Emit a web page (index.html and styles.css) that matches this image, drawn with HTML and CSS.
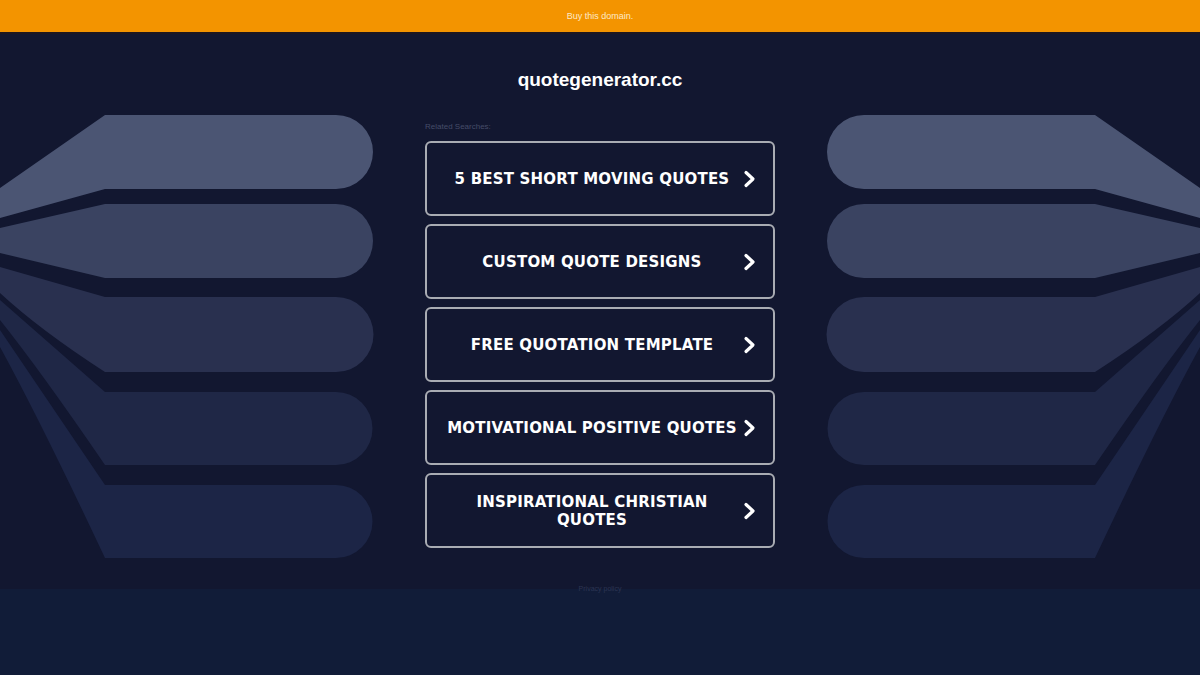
FILE: index.html
```html
<!DOCTYPE html>
<html lang="en">
<head>
<meta charset="utf-8">
<title>quotegenerator.cc</title>
<link rel="stylesheet" href="styles.css">
</head>
<body>
<div class="topbar"><a class="buy" href="#">Buy this domain.</a></div>
<div class="stage">
  <svg class="deco deco-left" width="380" height="589" viewBox="0 0 380 589" aria-hidden="true">
    <path fill="#4b5573" d="M105,115 H336 A37,37 0 0 1 336,189 H105 L0,218 V188 Z"/>
    <path fill="#3a4361" d="M105,204 H336 A37,37 0 0 1 336,278 H105 L0,253 V228 Z"/>
    <path fill="#29304f" d="M105,297 H336 A37.5,37.5 0 0 1 336,372 H105 Q40,330 0,293 V267 Z"/>
    <path fill="#1f2746" d="M105,392 H336 A36.5,36.5 0 0 1 336,465 H105 Q40,370 0,320 V300 Z"/>
    <path fill="#1c2546" d="M105,485 H336 A36.5,36.5 0 0 1 336,558 H105 Q40,420 0,347 V330 Z"/>
  </svg>
  <svg class="deco deco-right" width="380" height="589" viewBox="0 0 380 589" aria-hidden="true">
    <path fill="#4b5573" d="M105,115 H336 A37,37 0 0 1 336,189 H105 L0,218 V188 Z"/>
    <path fill="#3a4361" d="M105,204 H336 A37,37 0 0 1 336,278 H105 L0,253 V228 Z"/>
    <path fill="#29304f" d="M105,297 H336 A37.5,37.5 0 0 1 336,372 H105 Q40,330 0,293 V267 Z"/>
    <path fill="#1f2746" d="M105,392 H336 A36.5,36.5 0 0 1 336,465 H105 Q40,370 0,320 V300 Z"/>
    <path fill="#1c2546" d="M105,485 H336 A36.5,36.5 0 0 1 336,558 H105 Q40,420 0,347 V330 Z"/>
  </svg>
  <main class="content">
    <h1 class="domain">quotegenerator.cc</h1>
    <p class="related">Related Searches:</p>
    <ul class="links">
      <li><a class="link" href="#"><span class="label">5 BEST SHORT MOVING QUOTES</span><svg class="chev" width="14" height="18" viewBox="0 0 14 18"><path d="M3,2.5 L10,9 L3,15.5" fill="none" stroke="#fff" stroke-width="3.2" stroke-linecap="round" stroke-linejoin="round"/></svg></a></li>
      <li><a class="link" href="#"><span class="label">CUSTOM QUOTE DESIGNS</span><svg class="chev" width="14" height="18" viewBox="0 0 14 18"><path d="M3,2.5 L10,9 L3,15.5" fill="none" stroke="#fff" stroke-width="3.2" stroke-linecap="round" stroke-linejoin="round"/></svg></a></li>
      <li><a class="link" href="#"><span class="label">FREE QUOTATION TEMPLATE</span><svg class="chev" width="14" height="18" viewBox="0 0 14 18"><path d="M3,2.5 L10,9 L3,15.5" fill="none" stroke="#fff" stroke-width="3.2" stroke-linecap="round" stroke-linejoin="round"/></svg></a></li>
      <li><a class="link" href="#"><span class="label">MOTIVATIONAL POSITIVE QUOTES</span><svg class="chev" width="14" height="18" viewBox="0 0 14 18"><path d="M3,2.5 L10,9 L3,15.5" fill="none" stroke="#fff" stroke-width="3.2" stroke-linecap="round" stroke-linejoin="round"/></svg></a></li>
      <li><a class="link" href="#"><span class="label">INSPIRATIONAL CHRISTIAN QUOTES</span><svg class="chev" width="14" height="18" viewBox="0 0 14 18"><path d="M3,2.5 L10,9 L3,15.5" fill="none" stroke="#fff" stroke-width="3.2" stroke-linecap="round" stroke-linejoin="round"/></svg></a></li>
    </ul>
  </main>
</div>
<footer class="footer"><a class="privacy" href="#">Privacy policy</a></footer>
</body>
</html>
```
FILE: styles.css
```css
html, body {
  margin: 0;
  padding: 0;
}
body {
  background: #111c38;
  font-family: "Liberation Sans", Arial, sans-serif;
  color: #fff;
  overflow: hidden;
}
.topbar {
  height: 32px;
  background: #f39400;
  border-bottom: 2px solid #1d1720;
  display: flex;
  align-items: center;
  justify-content: center;
}
.buy {
  color: #fde9c6;
  font-size: 9px;
  text-decoration: none;
}
.stage {
  position: relative;
  height: 555px;
  background: #121730;
}
.deco {
  position: absolute;
  top: -34px;
}
.deco-left { left: 0; }
.deco-right { right: 0; transform: scaleX(-1); }
.content {
  position: relative;
  width: 350px;
  margin: 0 auto;
  padding-top: 35px;
}
.domain {
  margin: 0;
  text-align: center;
  font-size: 19px;
  font-weight: bold;
  line-height: 22px;
  color: #fff;
}
.related {
  margin: 31px 0 0;
  font-size: 8px;
  line-height: 10px;
  color: #454c68;
}
.links {
  list-style: none;
  margin: 9px 0 0;
  padding: 0;
  display: flex;
  flex-direction: column;
  gap: 8px;
}
.link {
  box-sizing: border-box;
  height: 75px;
  border: 2px solid #a9acb3;
  border-radius: 6px;
  display: flex;
  align-items: center;
  padding: 0 16px 0 14px;
  text-decoration: none;
  color: #fff;
  background: #121730;
}
.label {
  flex: 1;
  text-align: center;
  font-family: "DejaVu Sans", Verdana, sans-serif;
  font-weight: bold;
  font-size: 15px;
  line-height: 18px;
  letter-spacing: 0.2px;
  padding: 0 4px;
}
.chev {
  flex: none;
}
.footer {
  height: 86px;
  background: #111c38;
  text-align: center;
}
.privacy {
  display: inline-block;
  font-size: 7px;
  color: #2c3553;
  text-decoration: none;
  line-height: 6px;
  vertical-align: top;
  position: relative;
  top: -3px;
}
```
